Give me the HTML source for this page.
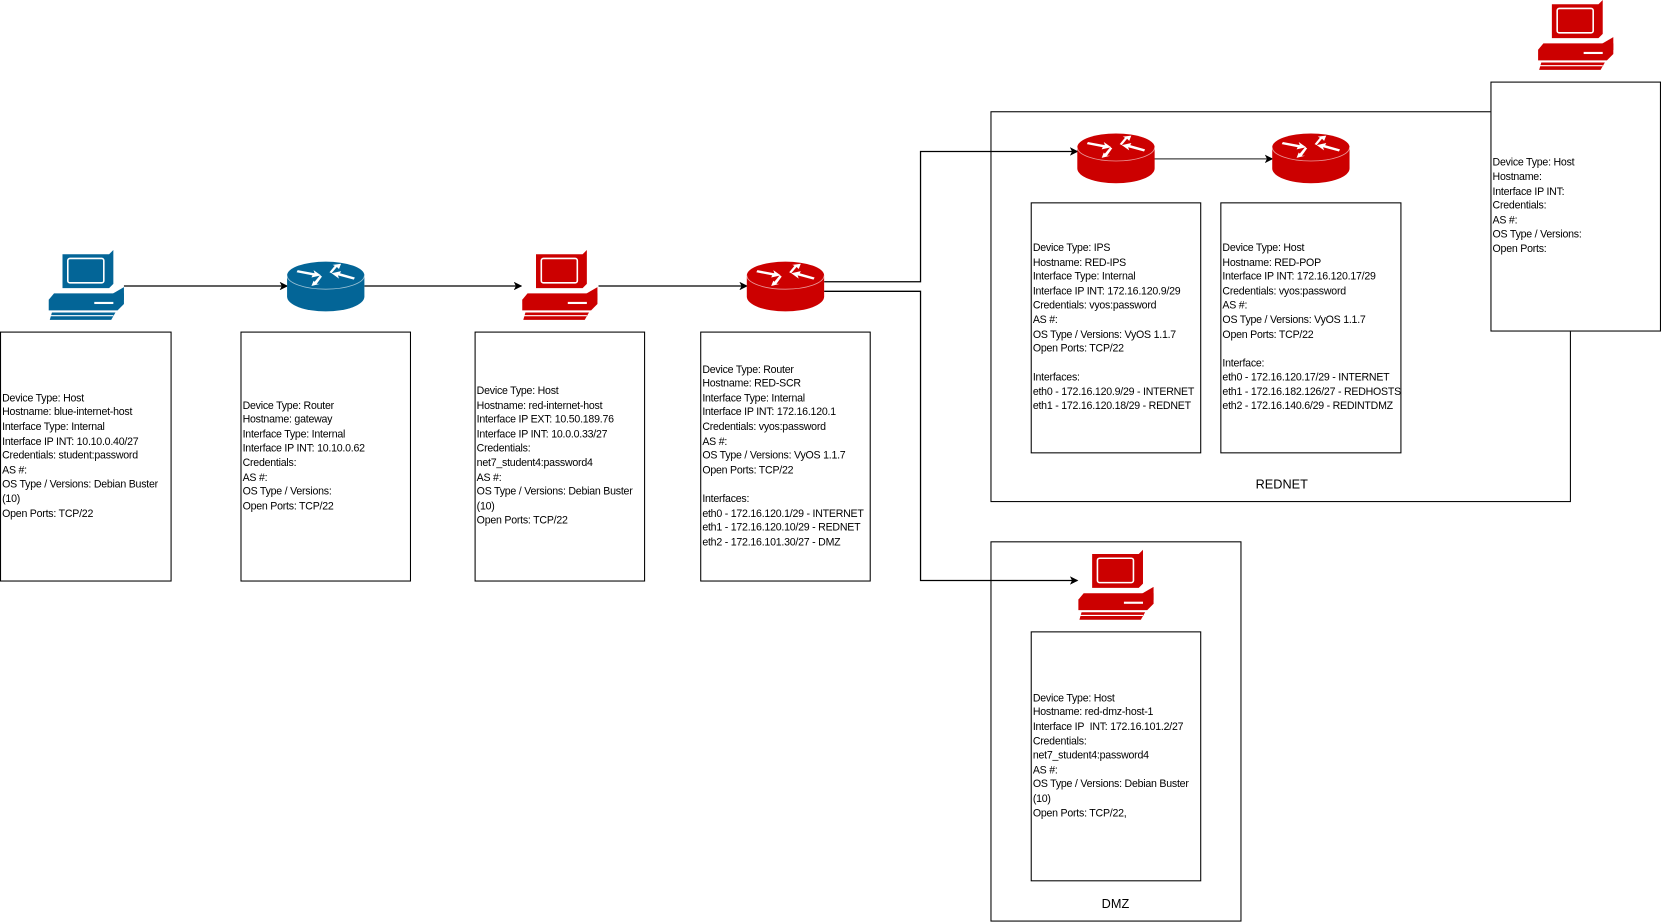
<!DOCTYPE html>
<html><head><meta charset="utf-8"><style>
html,body{margin:0;padding:0;background:#fff;width:1661px;height:922px;overflow:hidden}
#w{position:absolute;left:0;top:0;width:1568px;height:870px;transform:scale(1.0593);transform-origin:0 0}
.b{position:absolute;border:1px solid #000;box-sizing:border-box;display:flex;align-items:center;font-family:"Liberation Sans",sans-serif;font-size:10px;letter-spacing:-0.22px;line-height:13.6px;color:#000;padding-left:1px;white-space:nowrap;overflow:hidden}
.g{position:absolute;border:1px solid #000;box-sizing:border-box}
.lbl{position:absolute;font-family:"Liberation Sans",sans-serif;font-size:12px;text-align:center}
svg{position:absolute;left:0;top:0}
</style></head><body><div id="w">
<svg width="1568" height="870">
<defs>
<marker id="a" markerWidth="8" markerHeight="8" refX="7" refY="4" orient="auto" markerUnits="userSpaceOnUse"><path d="M0,0 L8,4 L0,8 L2,4z" fill="#000"/></marker>
<g id="pc"><path d="M14,2 L58,2 L62,-2 L62,30 L58,34 L14,34z" fill="currentColor"/><rect x="19" y="6" width="34" height="23" rx="2" fill="none" stroke="#fff" stroke-width="1.5"/><path d="M1,45 L6,39 L72,39 L72,49 L66,55 L1,55z" fill="currentColor"/><path d="M60,40 L72,33 L72,45 L66,52z" fill="currentColor"/><rect x="44" y="47" width="18" height="2" fill="#fff"/><path d="M4,57 L64,57 L60,64 L2,64z" fill="currentColor"/><path d="M2,60 L62,60" stroke="#fff" stroke-width="1"/></g>
<g id="rt"><path d="M0,14 L0,34 A36.5,14 0 0 0 73,34 L73,14z" fill="currentColor"/><ellipse cx="36.5" cy="14" rx="36.5" ry="13" fill="currentColor"/><path d="M0,14 A36.5,13 0 0 0 73,14" fill="none" stroke="#fff" stroke-width="0.8" opacity=".6"/><g fill="#fff"><path d="M10,9 L26,12 L25,9 L32,14 L23,16 L24,14 L9,11z"/><path d="M63,18 L48,14 L49,17 L42,12 L51,10 L50,12 L64,16z"/><path d="M40,11 L45,5 L43,4 L51,3 L49,8 L47,6 L42,12z"/><path d="M33,15 L28,22 L31,22 L23,24 L25,19 L26,20 L31,14z"/></g></g>
</defs>
<g stroke="#000" stroke-width="1.2" fill="none">
<path d="M117,270 L271,270" marker-end="url(#a)"/>
<path d="M344,270 L492,270" marker-end="url(#a)"/>
<path d="M565,270 L705,270" marker-end="url(#a)"/>
<path d="M778,266 L869,266 L869,143 L1017,143" marker-end="url(#a)"/>
<path d="M778,275 L869,275 L869,548 L1017,548" marker-end="url(#a)"/>
<path d="M1089,150 L1201,150" stroke="#444" marker-end="url(#a)"/>
</g>
<use href="#pc" x="45" y="238" style="color:#036597"/>
<use href="#rt" x="271" y="246" style="color:#036597"/>
<use href="#pc" x="492" y="238" style="color:#cc0000"/>
<use href="#rt" x="705" y="246" style="color:#cc0000"/>
<use href="#rt" x="1017" y="125" style="color:#cc0000"/>
<use href="#rt" x="1201" y="125" style="color:#cc0000"/>
<use href="#pc" x="1451" y="2" style="color:#cc0000"/>
<use href="#pc" x="1017" y="521" style="color:#cc0000"/>
</svg>
<div class="g" style="left:935px;top:105px;width:548px;height:369px"></div>
<div class="lbl" style="left:1150px;top:450px;width:120px">REDNET</div>
<div class="g" style="left:935px;top:511px;width:237px;height:359px"></div>
<div class="lbl" style="left:993px;top:846px;width:120px">DMZ</div>
<div class="b" style="left:0;top:313px;width:162px;height:236px"><div>Device Type: Host<br>Hostname: blue-internet-host<br>Interface Type: Internal<br>Interface IP INT: 10.10.0.40/27<br>Credentials: student:password<br>AS #:<br>OS Type / Versions: Debian Buster<br>(10)<br>Open Ports: TCP/22</div></div>
<div class="b" style="left:227px;top:313px;width:161px;height:236px"><div>Device Type: Router<br>Hostname: gateway<br>Interface Type: Internal<br>Interface IP INT: 10.10.0.62<br>Credentials:<br>AS #:<br>OS Type / Versions:<br>Open Ports: TCP/22</div></div>
<div class="b" style="left:448px;top:313px;width:161px;height:236px"><div>Device Type: Host<br>Hostname: red-internet-host<br>Interface IP EXT: 10.50.189.76<br>Interface IP INT: 10.0.0.33/27<br>Credentials:<br>net7_student4:password4<br>AS #:<br>OS Type / Versions: Debian Buster<br>(10)<br>Open Ports: TCP/22</div></div>
<div class="b" style="left:661px;top:313px;width:161px;height:236px"><div>Device Type: Router<br>Hostname: RED-SCR<br>Interface Type: Internal<br>Interface IP INT: 172.16.120.1<br>Credentials: vyos:password<br>AS #:<br>OS Type / Versions: VyOS 1.1.7<br>Open Ports: TCP/22<br><br>Interfaces:<br>eth0 - 172.16.120.1/29 - INTERNET<br>eth1 - 172.16.120.10/29 - REDNET<br>eth2 - 172.16.101.30/27 - DMZ</div></div>
<div class="b" style="left:973px;top:191px;width:161px;height:237px"><div>Device Type: IPS<br>Hostname: RED-IPS<br>Interface Type: Internal<br>Interface IP INT: 172.16.120.9/29<br>Credentials: vyos:password<br>AS #:<br>OS Type / Versions: VyOS 1.1.7<br>Open Ports: TCP/22<br><br>Interfaces:<br>eth0 - 172.16.120.9/29 - INTERNET<br>eth1 - 172.16.120.18/29 - REDNET</div></div>
<div class="b" style="left:1152px;top:191px;width:171px;height:237px"><div>Device Type: Host<br>Hostname: RED-POP<br>Interface IP INT: 172.16.120.17/29<br>Credentials: vyos:password<br>AS #:<br>OS Type / Versions: VyOS 1.1.7<br>Open Ports: TCP/22<br><br>Interface:<br>eth0 - 172.16.120.17/29 - INTERNET<br>eth1 - 172.16.182.126/27 - REDHOSTS<br>eth2 - 172.16.140.6/29 - REDINTDMZ</div></div>
<div class="b" style="left:1407px;top:77px;width:161px;height:236px;background:#fff"><div>Device Type: Host<br>Hostname:<br>Interface IP INT:<br>Credentials:<br>AS #:<br>OS Type / Versions:<br>Open Ports:</div></div>
<div class="b" style="left:973px;top:596px;width:161px;height:236px"><div>Device Type: Host<br>Hostname: red-dmz-host-1<br>Interface IP&nbsp; INT: 172.16.101.2/27<br>Credentials:<br>net7_student4:password4<br>AS #:<br>OS Type / Versions: Debian Buster<br>(10)<br>Open Ports: TCP/22,</div></div>
</div></body></html>
